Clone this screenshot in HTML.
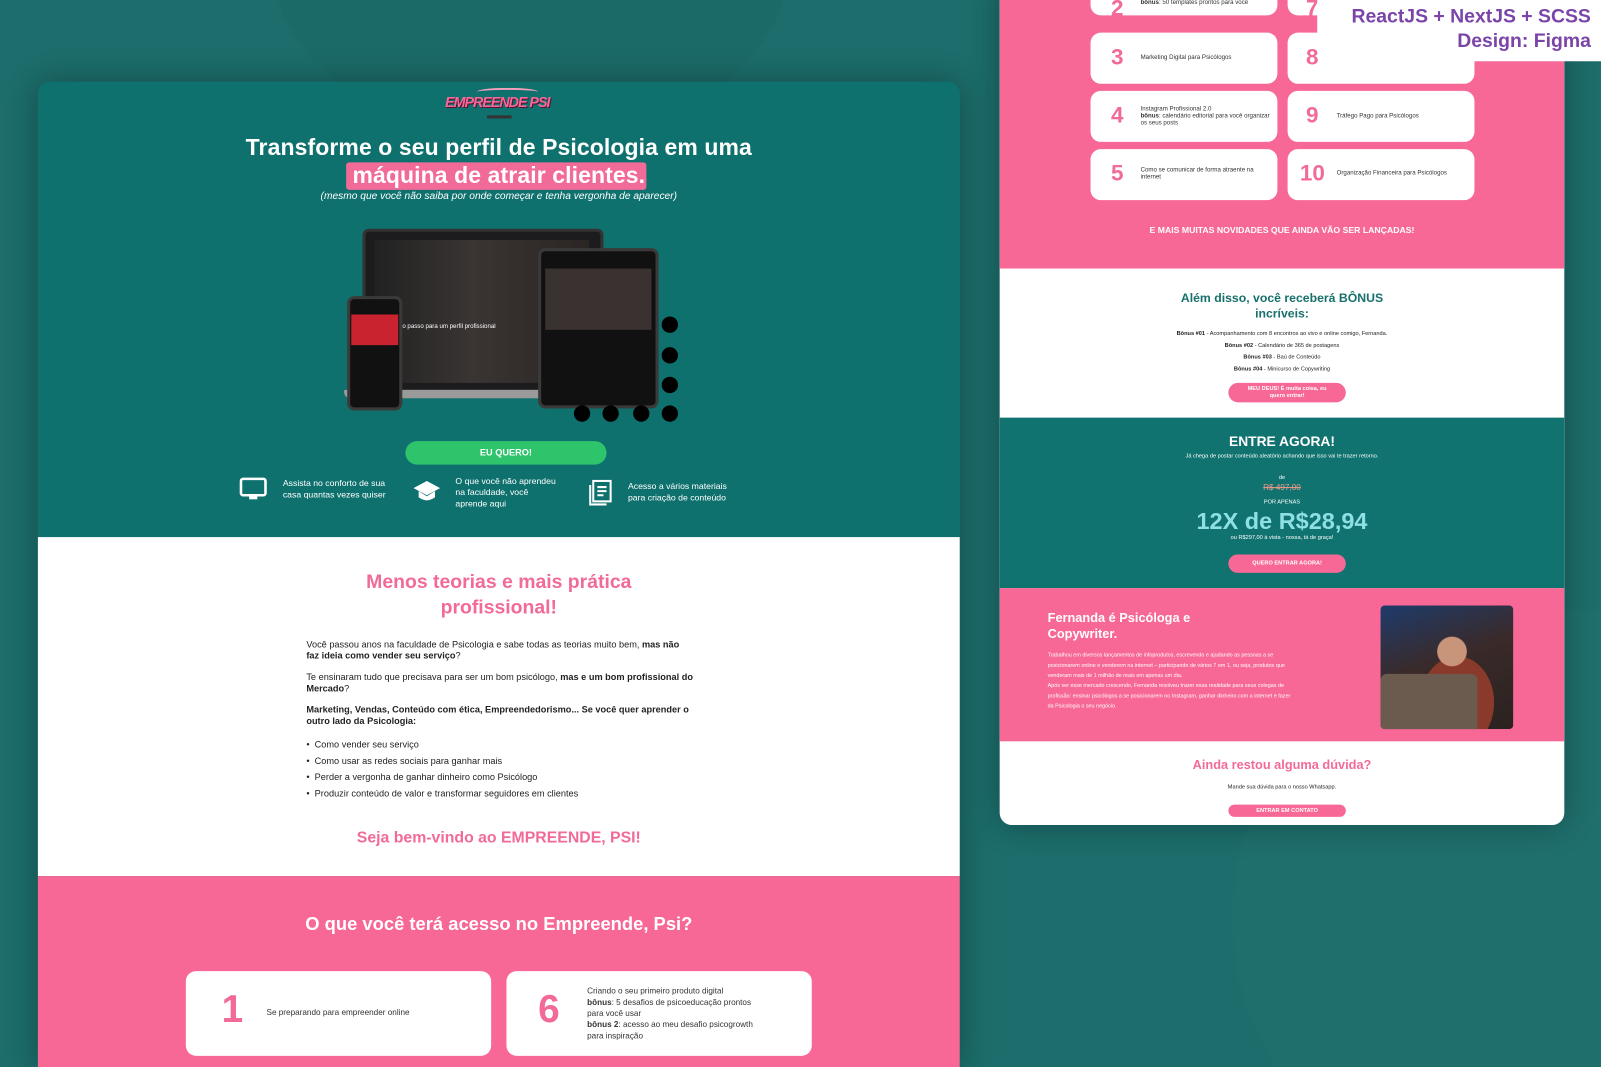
<!DOCTYPE html>
<html><head><meta charset="utf-8"><style>
*{margin:0;padding:0;box-sizing:border-box}
html,body{width:1601px;height:1067px;overflow:hidden;background:#1b6b69}
body{font-family:"Liberation Sans","DejaVu Sans",sans-serif}
#s{position:absolute;left:0;top:0;width:1568px;height:1045px;transform:scale(1.0211);transform-origin:0 0;overflow:hidden;
background:radial-gradient(ellipse 420px 300px at 520px -40px,#1b6a68 60%,transparent 61%),radial-gradient(ellipse 700px 600px at 1560px 900px,#1f6f6d 50%,transparent 51%),#1c6d6b}
.a{position:absolute}
.c{text-align:center}
.w{color:#fff}
.pk{color:#f26a98}
.card{background:#fff;border-radius:10px;position:absolute}
.num{position:absolute;font-weight:bold;color:#f26a98}
.t{position:absolute;font-size:6px;color:#333;line-height:7px}
.btn{position:absolute;border-radius:12px;color:#fff;font-weight:bold;text-align:center}
.dot{position:absolute;width:16px;height:16px;border-radius:50%;background:#000}
</style></head><body><div id="s">

<!-- LEFT CARD -->
<div class="a" style="left:37px;top:80px;width:903px;height:965px;border-radius:12px 12px 0 0;overflow:hidden;box-shadow:0 0 30px rgba(0,0,0,.3)">
 <div class="a" style="left:0;top:0;width:903px;height:446px;background:#0f716e"></div>
 <!-- logo -->
 <div class="a c" style="left:390px;top:12px;width:120px;white-space:nowrap;font-style:italic;font-weight:bold;font-size:14px;color:#f26a98;letter-spacing:-1px;text-shadow:1px 1px 0 #5a1030">EMPREENDE PSI</div>
 <div class="a" style="left:430px;top:6px;width:60px;height:8px;border-top:2px solid #f7a0bd;border-radius:50%"></div>
 <div class="a" style="left:440px;top:33px;width:24px;height:3px;background:#333"></div>
 <div class="a c w" style="left:0;top:52px;width:903px;font-size:22.5px;font-weight:bold;letter-spacing:.1px">Transforme o seu perfil de Psicologia em uma</div>
 <div class="a" style="left:302px;top:79px;width:294px;height:27px;background:#f26a98;border-radius:3px"></div>
 <div class="a c w" style="left:0;top:79px;width:903px;font-size:22.5px;font-weight:bold;letter-spacing:.1px">máquina de atrair clientes.</div>
 <div class="a c w" style="left:0;top:107px;width:903px;font-size:10px;font-style:italic">(mesmo que você não saiba por onde começar e tenha vergonha de aparecer)</div>
 <!-- devices -->
 <div class="a" style="left:318px;top:144px;width:236px;height:160px;background:#1c1c1e;border:3px solid #333;border-radius:6px"></div>
 <div class="a" style="left:330px;top:155px;width:210px;height:140px;background:linear-gradient(90deg,#222 0,#3a3433 45%,#2b2524 100%)"></div>
 <div class="a" style="left:300px;top:302px;width:262px;height:8px;background:#9a9a9a;border-radius:0 0 6px 6px"></div>
 <div class="a w" style="left:357px;top:237px;font-size:6px">o passo para um perfil profissional</div>
 <div class="a" style="left:490px;top:163px;width:118px;height:157px;background:#111;border:3px solid #3a3a3a;border-radius:7px"></div>
 <div class="a" style="left:497px;top:183px;width:104px;height:60px;background:#3a3231"></div>
 <div class="a" style="left:303px;top:210px;width:54px;height:112px;background:#111;border:3px solid #3a3a3a;border-radius:7px"></div>
 <div class="a" style="left:307px;top:228px;width:46px;height:30px;background:#c8232f"></div>
 <div class="dot" style="left:611px;top:230px"></div><div class="dot" style="left:611px;top:260px"></div><div class="dot" style="left:611px;top:289px"></div><div class="dot" style="left:611px;top:317px"></div>
 <div class="dot" style="left:525px;top:317px"></div><div class="dot" style="left:553px;top:317px"></div><div class="dot" style="left:583px;top:317px"></div>
 <div class="btn" style="left:360px;top:352px;width:197px;height:23px;background:#2ec46c;line-height:23px;font-size:9px">EU QUERO!</div>
 <!-- features -->
 <svg class="a" style="left:197px;top:387px" width="28" height="24" viewBox="0 0 28 24"><rect x="2" y="2" width="24" height="16" rx="2" fill="none" stroke="#fff" stroke-width="2.5"/><rect x="10" y="19" width="8" height="3" fill="#fff"/></svg>
 <div class="a w" style="left:240px;top:388px;font-size:8.5px;line-height:11px">Assista no conforto de sua<br>casa quantas vezes quiser</div>
 <svg class="a" style="left:367px;top:389px" width="28" height="24" viewBox="0 0 28 24"><path d="M14 2 L27 9 L14 16 L1 9Z" fill="#fff"/><path d="M6 12 V18 Q14 24 22 18 V12 L14 17Z" fill="#fff"/></svg>
 <div class="a w" style="left:409px;top:386px;font-size:8.5px;line-height:11px">O que você não aprendeu<br>na faculdade, você<br>aprende aqui</div>
 <svg class="a" style="left:538px;top:389px" width="26" height="28" viewBox="0 0 26 28"><rect x="6" y="2" width="17" height="20" fill="none" stroke="#fff" stroke-width="2"/><path d="M3 6 V25 H19" fill="none" stroke="#fff" stroke-width="2"/><path d="M10 8h9M10 12h9M10 16h6" stroke="#fff" stroke-width="2"/></svg>
 <div class="a w" style="left:578px;top:391px;font-size:8.5px;line-height:11px">Acesso a vários materiais<br>para criação de conteúdo</div>
 <!-- white section -->
 <div class="a" style="left:0;top:446px;width:903px;height:332px;background:#fff"></div>
 <div class="a c pk" style="left:0;top:478px;width:903px;font-size:19px;font-weight:bold;line-height:25px">Menos teorias e mais prática<br>profissional!</div>
 <div class="a" style="left:263px;top:546px;width:380px;font-size:9px;line-height:11px;color:#222">
  <p>Você passou anos na faculdade de Psicologia e sabe todas as teorias muito bem, <b>mas não faz ideia como vender seu serviço</b>?</p>
  <p style="margin-top:10px">Te ensinaram tudo que precisava para ser um bom psicólogo, <b>mas e um bom profissional do Mercado</b>?</p>
  <p style="margin-top:10px"><b>Marketing, Vendas, Conteúdo com ética, Empreendedorismo... Se você quer aprender o outro lado da Psicologia:</b></p>
  <p style="margin-top:9px;line-height:16px">• &nbsp;Como vender seu serviço<br>• &nbsp;Como usar as redes sociais para ganhar mais<br>• &nbsp;Perder a vergonha de ganhar dinheiro como Psicólogo<br>• &nbsp;Produzir conteúdo de valor e transformar seguidores em clientes</p>
 </div>
 <div class="a c pk" style="left:0;top:732px;width:903px;font-size:15.5px;font-weight:bold">Seja bem-vindo ao EMPREENDE, PSI!</div>
 <!-- pink -->
 <div class="a" style="left:0;top:778px;width:903px;height:200px;background:#f76896"></div>
 <div class="a c w" style="left:0;top:815px;width:903px;font-size:18px;font-weight:bold">O que você terá acesso no Empreende, Psi?</div>
 <div class="card" style="left:145px;top:871px;width:299px;height:83px"></div>
 <div class="num" style="left:180px;top:888px;font-size:38px">1</div>
 <div class="a" style="left:224px;top:907px;font-size:8px;color:#333">Se preparando para empreender online</div>
 <div class="card" style="left:459px;top:871px;width:299px;height:83px"></div>
 <div class="num" style="left:490px;top:888px;font-size:38px">6</div>
 <div class="a" style="left:538px;top:885px;font-size:8px;line-height:11px;color:#333">Criando o seu primeiro produto digital<br><b>bônus</b>: 5 desafios de psicoeducação prontos<br>para você usar<br><b>bônus 2</b>: acesso ao meu desafio psicogrowth<br>para inspiração</div>
</div>

<!-- RIGHT CARD -->
<div class="a" style="left:979px;top:-20px;width:553px;height:828px;border-radius:0 0 12px 12px;overflow:hidden;background:#fff;box-shadow:0 0 30px rgba(0,0,0,.3)">
 <div class="a" style="left:0;top:0;width:553px;height:283px;background:#f76896"></div>
 <div class="card" style="left:89px;top:-10px;width:183px;height:45px"></div><div class="num" style="left:109px;top:15px;font-size:22px">2</div><div class="t" style="left:138px;top:20px"><b>bônus</b>: 50 templates prontos para você</div>
 <div class="card" style="left:282px;top:-10px;width:183px;height:45px"></div><div class="num" style="left:300px;top:15px;font-size:22px">7</div>
 <div class="card" style="left:89px;top:52px;width:183px;height:50px"></div><div class="num" style="left:109px;top:63px;font-size:22px">3</div><div class="t" style="left:138px;top:74px">Marketing Digital para Psicólogos</div>
 <div class="card" style="left:282px;top:52px;width:183px;height:50px"></div><div class="num" style="left:300px;top:63px;font-size:22px">8</div>
 <div class="card" style="left:89px;top:109px;width:183px;height:50px"></div><div class="num" style="left:109px;top:120px;font-size:22px">4</div><div class="t" style="left:138px;top:124px">Instagram Profissional 2.0<br><b>bônus</b>: calendário editorial para você organizar<br>os seus posts</div>
 <div class="card" style="left:282px;top:109px;width:183px;height:50px"></div><div class="num" style="left:300px;top:120px;font-size:22px">9</div><div class="t" style="left:330px;top:131px">Tráfego Pago para Psicólogos</div>
 <div class="card" style="left:89px;top:166px;width:183px;height:50px"></div><div class="num" style="left:109px;top:177px;font-size:22px">5</div><div class="t" style="left:138px;top:184px">Como se comunicar de forma atraente na<br>internet</div>
 <div class="card" style="left:282px;top:166px;width:183px;height:50px"></div><div class="num" style="left:294px;top:177px;font-size:22px">10</div><div class="t" style="left:330px;top:187px">Organização Financeira para Psicólogos</div>
 <div class="a c w" style="left:0;top:240px;width:553px;font-size:8.5px;font-weight:bold">E MAIS MUITAS NOVIDADES QUE AINDA VÃO SER LANÇADAS!</div>
 <!-- bonus -->
 <div class="a c" style="left:0;top:305px;width:553px;font-size:12px;font-weight:bold;color:#16706b;line-height:15px">Além disso, você receberá BÔNUS<br>incríveis:</div>
 <div class="a c" style="left:0;top:342px;width:553px;font-size:5.5px;line-height:11.7px;color:#222"><b>Bônus #01</b> - Acompanhamento com 8 encontros ao vivo e online comigo, Fernanda.<br><b>Bônus #02</b> - Calendário de 365 de postagens<br><b>Bônus #03</b> - Baú de Conteúdo<br><b>Bônus #04</b> - Minicurso de Copywriting</div>
 <div class="btn" style="left:224px;top:395px;width:115px;height:19px;background:#f76896;font-size:5.5px;line-height:7px;padding-top:3px">MEU DEUS! É muita coisa, eu<br>quero entrar!</div>
 <!-- teal -->
 <div class="a" style="left:0;top:429px;width:553px;height:167px;background:#107370"></div>
 <div class="a c w" style="left:0;top:445px;width:553px;font-size:13.5px;font-weight:bold">ENTRE AGORA!</div>
 <div class="a c w" style="left:0;top:464px;width:553px;font-size:5.5px">Já chega de postar conteúdo aleatório achando que isso vai te trazer retorno.</div>
 <div class="a c w" style="left:0;top:485px;width:553px;font-size:5.5px">de</div>
 <div class="a c" style="left:0;top:493px;width:553px;font-size:8px;color:#e98;text-decoration:line-through">R$ 497,00</div>
 <div class="a c w" style="left:0;top:509px;width:553px;font-size:5.5px">POR APENAS</div>
 <div class="a c" style="left:0;top:517px;width:553px;font-size:23px;font-weight:bold;color:#8fdfe6">12X de R$28,94</div>
 <div class="a c w" style="left:0;top:544px;width:553px;font-size:5.5px">ou R$297,00 à vista - nossa, tá de graça!</div>
 <div class="btn" style="left:224px;top:563px;width:115px;height:18px;background:#f76896;font-size:5.5px;line-height:18px">QUERO ENTRAR AGORA!</div>
 <!-- fernanda -->
 <div class="a" style="left:0;top:596px;width:553px;height:150px;background:#f76896"></div>
 <div class="a w" style="left:47px;top:617px;font-size:12.5px;font-weight:bold;line-height:16px">Fernanda é Psicóloga e<br>Copywriter.</div>
 <div class="a w" style="left:47px;top:657px;width:240px;font-size:5.3px;line-height:10px">Trabalhou em diversos lançamentos de infoprodutos, escrevendo e ajudando as pessoas a se posicionarem online e venderem na internet – participando de vários 7 em 1, ou seja, produtos que venderam mais de 1 milhão de reais em apenas um dia.<br>Após ver esse mercado crescendo, Fernanda resolveu trazer essa realidade para seus colegas de profissão: ensinar psicólogos a se posicionarem no Instagram, ganhar dinheiro com a internet e fazer da Psicologia o seu negócio.</div>
 <div class="a" style="left:373px;top:613px;width:130px;height:121px;border-radius:4px;background:radial-gradient(circle at 70px 45px,#c9957a 0 14px,transparent 15px),radial-gradient(ellipse 40px 50px at 75px 95px,#8a3a2a 0 90%,transparent 91%),linear-gradient(160deg,#1e3b6a 0,#3a2a2a 45%,#2a2220 100%)"></div>
 <div class="a" style="left:373px;top:680px;width:95px;height:54px;background:#6b5a4e;border-radius:6px 6px 0 4px"></div>
 <!-- contact -->
 <div class="a c pk" style="left:0;top:762px;width:553px;font-size:12.5px;font-weight:bold">Ainda restou alguma dúvida?</div>
 <div class="a c" style="left:0;top:788px;width:553px;font-size:5.5px;color:#222">Mande sua dúvida para o nosso Whatsapp.</div>
 <div class="btn" style="left:224px;top:808px;width:115px;height:12px;background:#f76896;font-size:5.5px;line-height:12px">ENTRAR EM CONTATO</div>
</div>

<!-- badge -->
<div class="a" style="left:1290px;top:-20px;width:300px;height:80px;background:#fff;border-radius:18px"></div>
<div class="a" style="right:10px;top:5px;text-align:right;font-size:19px;font-weight:bold;color:#7a44a8;line-height:24px">ReactJS + NextJS + SCSS<br>Design: Figma</div>

</div></body></html>
